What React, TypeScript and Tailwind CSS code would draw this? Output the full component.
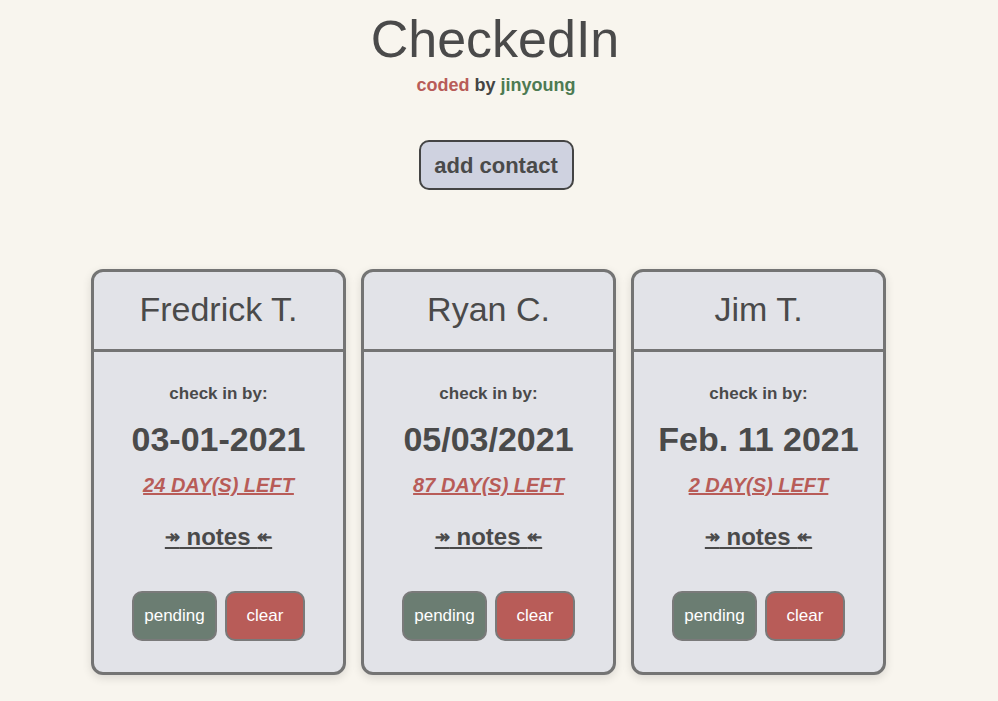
import React from "react";

const contacts = [
  { name: "Fredrick T.", date: "03-01-2021", left: "24 DAY(S) LEFT" },
  { name: "Ryan C.", date: "05/03/2021", left: "87 DAY(S) LEFT" },
  { name: "Jim T.", date: "Feb. 11 2021", left: "2 DAY(S) LEFT" },
];

function Card({ c }: { c: (typeof contacts)[number] }) {
  return (
    <div className="w-[255px] h-[406px] rounded-[12px] border-[3px] border-[#747474] bg-[#e2e3e8] flex flex-col shadow-[0_3px_10px_rgba(0,0,0,0.12)]">
      <div className="h-[80px] border-b-[3px] border-[#747474] flex items-center justify-center">
        <span className="text-[34px] leading-none text-[#4a4a4a] pb-[3px]">{c.name}</span>
      </div>
      <div className="flex flex-col items-center pt-[32px]">
        <div className="text-[17px] font-bold text-[#4a4a4a] leading-[20px]">check in by:</div>
        <div className="mt-[16px] text-[34px] font-bold text-[#4a4a4a] leading-[39px]">{c.date}</div>
        <div className="mt-[15px] text-[20px] font-bold italic underline text-[#b85c58] leading-[23px]">{c.left}</div>
        <div className="mt-[26px] text-[24px] font-bold underline text-[#4a4a4a] leading-[28px]">
          <span className="text-[18px] align-[2px]">↠</span> notes <span className="text-[18px] align-[2px]">↞</span>
        </div>
        <div className="mt-[40px] flex gap-[8px]">
          <button className="w-[85px] h-[50px] rounded-[10px] border-2 border-[#7a7a7a] bg-[#6b7d72] text-white text-[17px]">
            pending
          </button>
          <button className="w-[80px] h-[50px] rounded-[10px] border-2 border-[#7a7a7a] bg-[#b85c58] text-white text-[17px]">
            clear
          </button>
        </div>
      </div>
    </div>
  );
}

export default function App() {
  return (
    <div
      className="w-[998px] h-[701px] overflow-hidden bg-[#f8f5ee] text-[#4a4a4a]"
      style={{ fontFamily: '"Liberation Sans", Arial, sans-serif' }}
    >
      <div className="flex flex-col items-center">
        <h1 className="mt-[9px] text-[52px] leading-[61px] font-normal text-[#4a4a4a] mr-[8px]">CheckedIn</h1>
        <div className="mt-[5px] text-[18px] leading-[21px] font-bold mr-[6px]">
          <span className="text-[#b85c58]">coded</span> <span className="text-[#444444]">by</span>{" "}
          <span className="text-[#4d7a52]">jinyoung</span>
        </div>
        <button className="mt-[44px] w-[155px] h-[50px] rounded-[10px] border-2 border-[#444444] bg-[#cfd2e0] text-[22px] font-bold text-[#4a4a4a] mr-[6px]">
          add contact
        </button>
      </div>
      <div className="mt-[79px] pl-[91px] flex gap-[15px]">
        {contacts.map((c) => (
          <Card key={c.name} c={c} />
        ))}
      </div>
    </div>
  );
}
